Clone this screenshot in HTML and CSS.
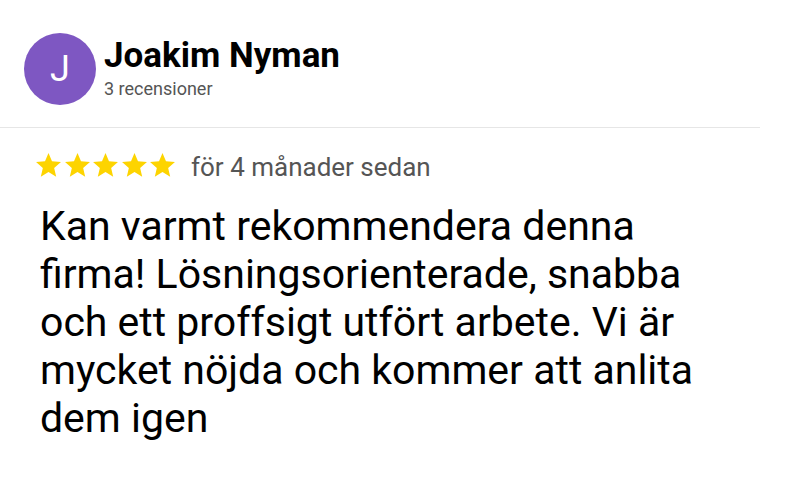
FILE: index.html
```html
<!DOCTYPE html>
<html lang="sv">
<head>
<meta charset="utf-8">
<link rel="stylesheet" href="styles.css">
</head>
<body>
<div class="review">
  <div class="header">
    <div class="avatar">J</div>
    <div class="who">
      <div class="name">Joakim Nyman</div>
      <div class="count">3 recensioner</div>
    </div>
  </div>
  <div class="divider"></div>
  <div class="meta">
    <div class="stars">
      <svg viewBox="2 2 20 19.27" class="star"><path d="M12 17.27L18.18 21l-1.64-7.03L22 9.24l-7.19-.61L12 2 9.19 8.63 2 9.24l5.46 4.73L5.82 21z"/></svg>
      <svg viewBox="2 2 20 19.27" class="star"><path d="M12 17.27L18.18 21l-1.64-7.03L22 9.24l-7.19-.61L12 2 9.19 8.63 2 9.24l5.46 4.73L5.82 21z"/></svg>
      <svg viewBox="2 2 20 19.27" class="star"><path d="M12 17.27L18.18 21l-1.64-7.03L22 9.24l-7.19-.61L12 2 9.19 8.63 2 9.24l5.46 4.73L5.82 21z"/></svg>
      <svg viewBox="2 2 20 19.27" class="star"><path d="M12 17.27L18.18 21l-1.64-7.03L22 9.24l-7.19-.61L12 2 9.19 8.63 2 9.24l5.46 4.73L5.82 21z"/></svg>
      <svg viewBox="2 2 20 19.27" class="star"><path d="M12 17.27L18.18 21l-1.64-7.03L22 9.24l-7.19-.61L12 2 9.19 8.63 2 9.24l5.46 4.73L5.82 21z"/></svg>
    </div>
    <span class="date">för 4 månader sedan</span>
  </div>
  <p class="text">Kan varmt rekommendera denna firma! Lösningsorienterade, snabba och ett proffsigt utfört arbete. Vi är mycket nöjda och kommer att anlita dem igen</p>
</div>
</body>
</html>
```
FILE: styles.css
```css
* { box-sizing: border-box; }
html, body { margin: 0; padding: 0; background: #fff; }
body { font-family: Roboto, "Noto Sans", sans-serif; color: #000; }
.review { width: 796px; height: 480px; overflow: hidden; }
.header { display: flex; align-items: flex-start; padding: 33px 0 0 24px; height: 127px; }
.avatar {
  width: 72px; height: 72px; border-radius: 50%;
  background: #7e57c2; color: #fff;
  display: flex; align-items: center; justify-content: center;
  font-size: 36px; flex: none;
}
.who { margin-left: 8px; padding-top: 3px; }
.name { font-size: 35px; font-weight: 700; line-height: 40px; }
.count { font-size: 18px; color: #555; line-height: 22px; margin-top: 2px; }
.divider { width: 760px; height: 1px; background: #e6e6e6; }
.meta { display: flex; align-items: flex-start; padding: 25px 0 0 36px; }
.stars { display: flex; gap: 3.5px; }
.star { width: 25px; height: 24px; fill: #fdd400; display: block; }
.date { margin-left: 16px; font-size: 26px; line-height: 24px; color: #555; margin-top: 2px; }
.text { margin: 23px 0 0 40px; width: 680px; font-size: 41px; line-height: 48px; }
```
